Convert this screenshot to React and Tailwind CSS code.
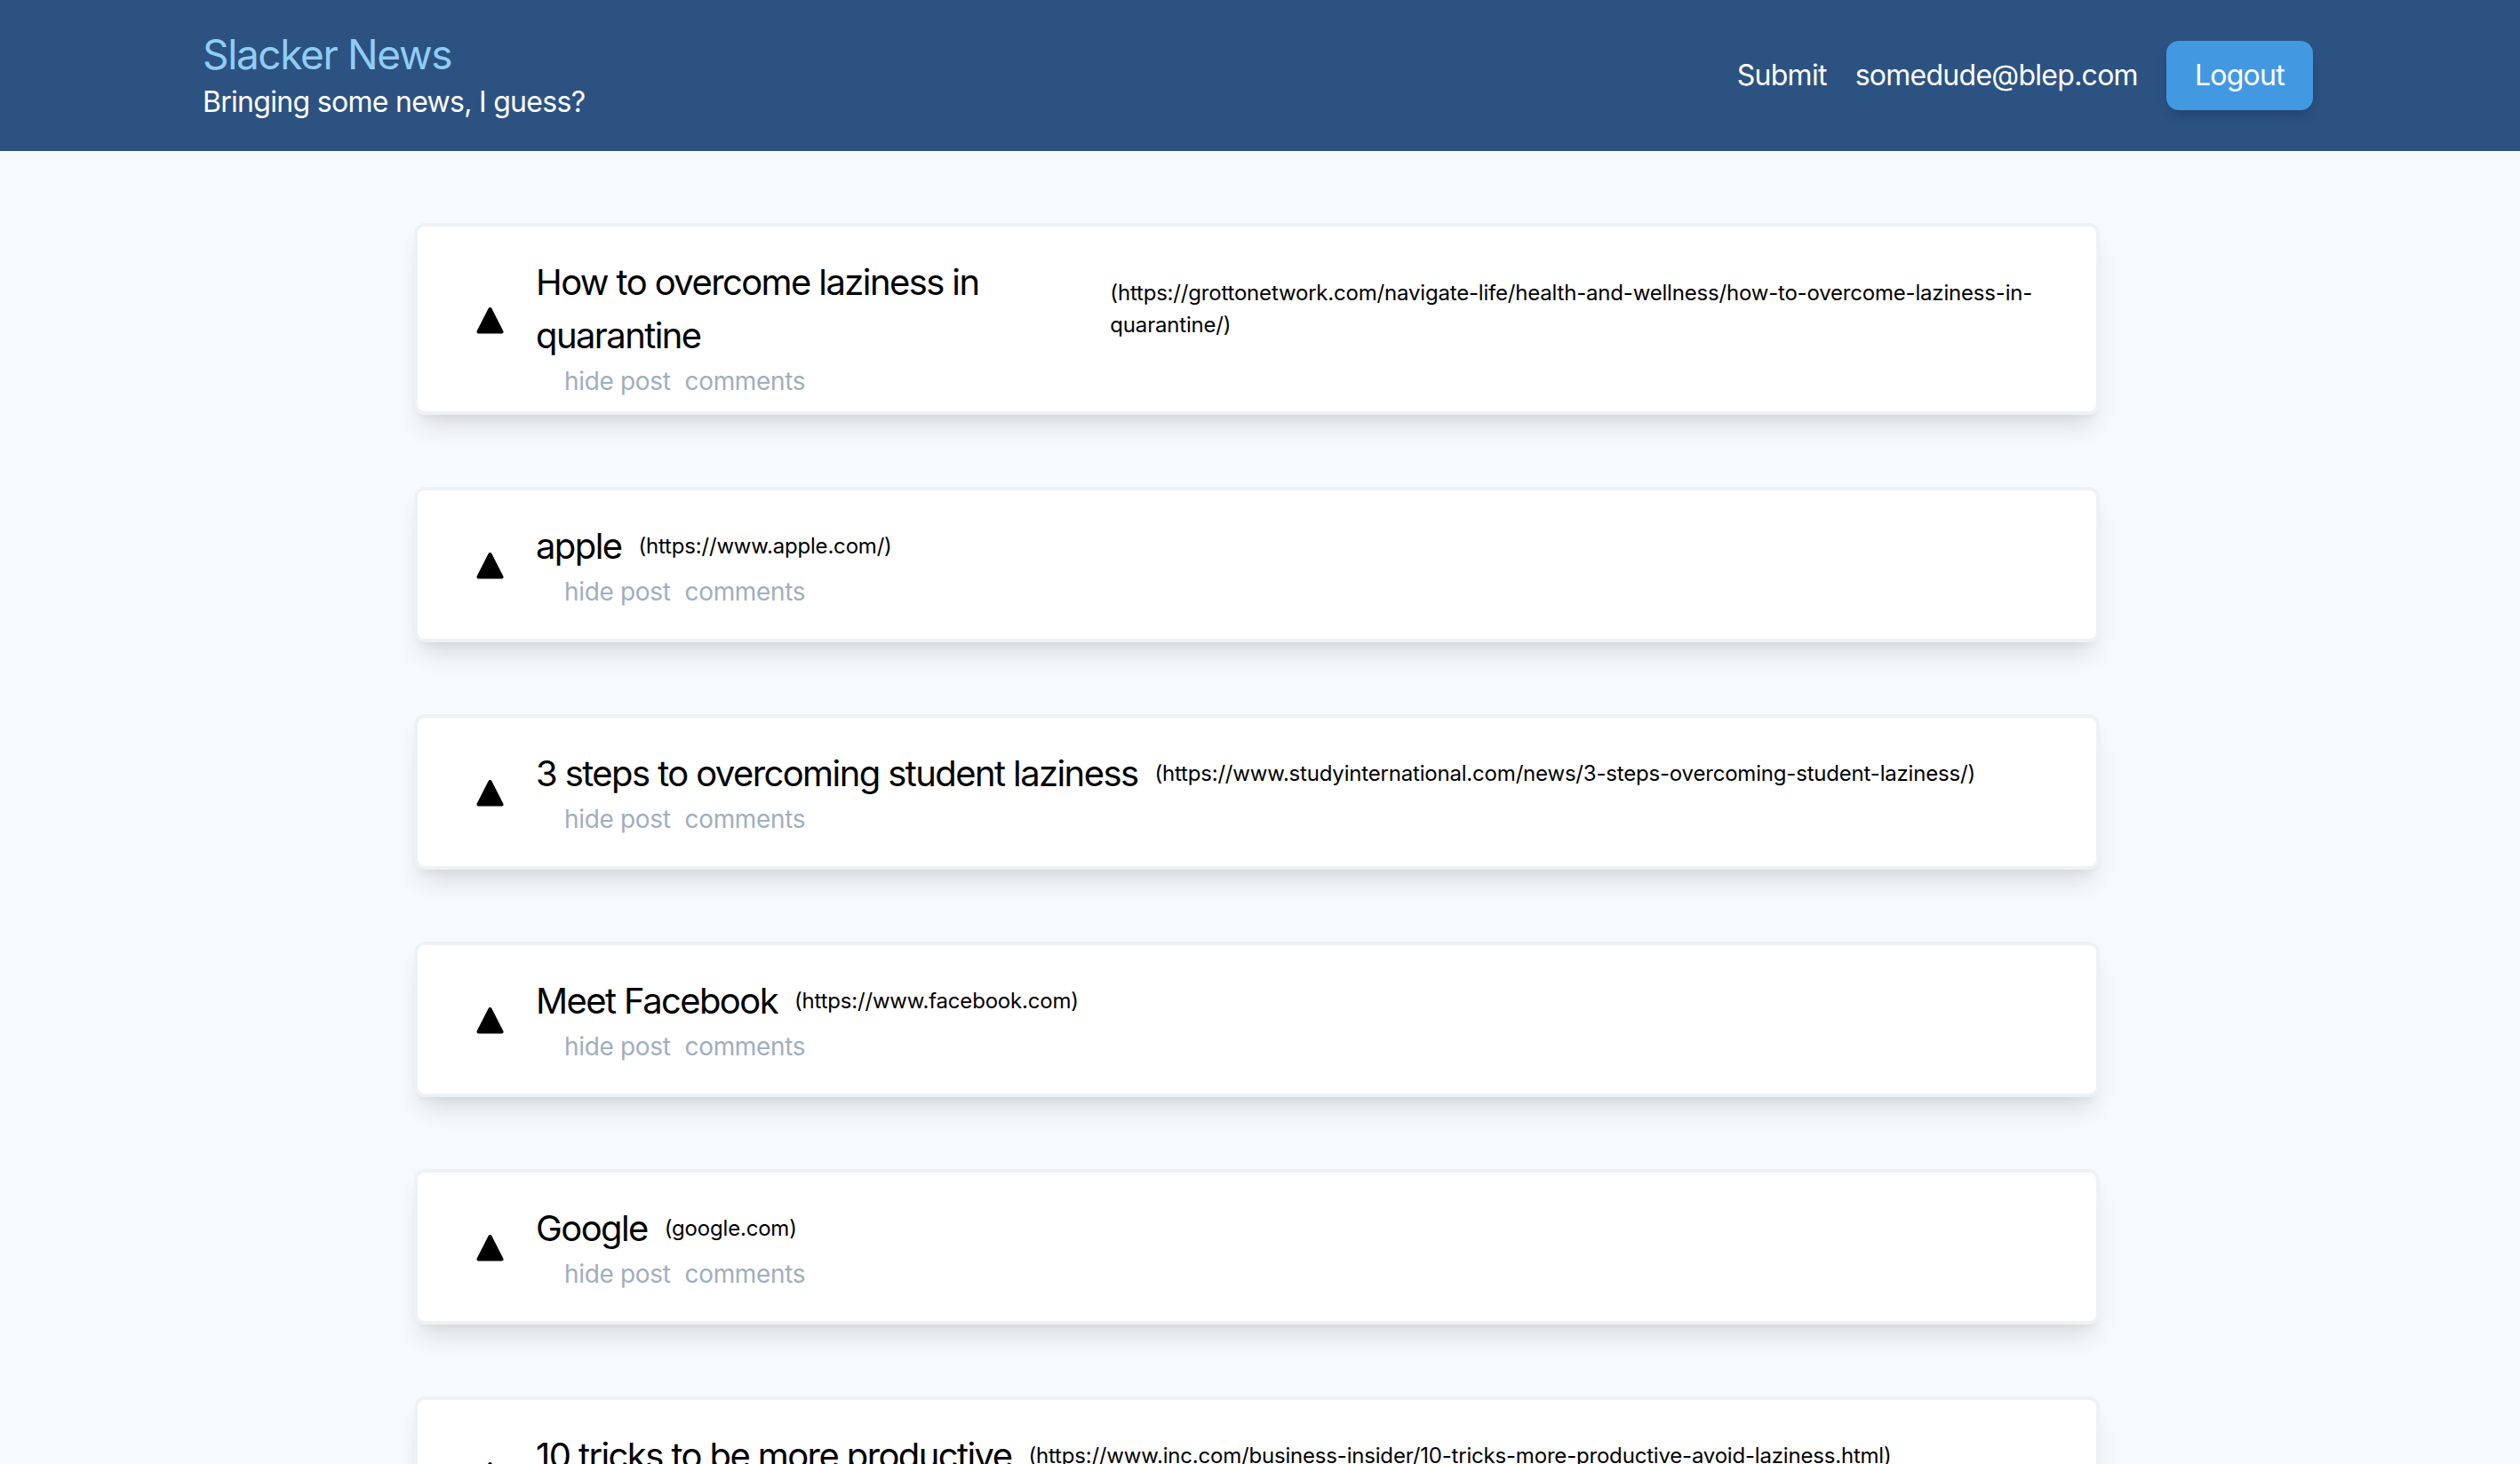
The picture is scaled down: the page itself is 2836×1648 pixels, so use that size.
import React from "react";

const posts = [
  {
    title: "How to overcome laziness in quarantine",
    url: "(https://grottonetwork.com/navigate-life/health-and-wellness/how-to-overcome-laziness-in-quarantine/)",
  },
  { title: "apple", url: "(https://www.apple.com/)" },
  {
    title: "3 steps to overcoming student laziness",
    url: "(https://www.studyinternational.com/news/3-steps-overcoming-student-laziness/)",
  },
  { title: "Meet Facebook", url: "(https://www.facebook.com)" },
  { title: "Google", url: "(google.com)" },
  {
    title: "10 tricks to be more productive",
    url: "(https://www.inc.com/business-insider/10-tricks-more-productive-avoid-laziness.html)",
  },
];

function Arrow() {
  return (
    <svg width="31" height="31" viewBox="0 0 31 31" aria-hidden="true">
      <path
        d="M15.5 3 L28.5 28.5 L2.5 28.5 Z"
        fill="#000"
        stroke="#000"
        strokeWidth="4"
        strokeLinejoin="round"
      />
    </svg>
  );
}

function Post({ title, url }) {
  return (
    <div className="mt-[81px] w-[1897px] flex rounded-xl border-4 border-[#edf2f7] bg-white pl-[66px] pr-[48px] pt-[15px] pb-[13px] shadow-[0_20px_28px_-8px_rgba(0,0,0,0.12),0_6px_10px_-4px_rgba(0,0,0,0.05)]">
      <div className="w-[31px] min-h-[139px] flex items-center shrink-0">
        <Arrow />
      </div>
      <div className="ml-[36px] mt-[18px] flex flex-col min-w-0">
        <div className="flex items-center">
          <span className="text-[40px] leading-[60px] tracking-[-0.04em] text-black">{title}</span>
          <span className="ml-[19px] text-[24px] leading-[36px] tracking-[-0.008em] text-black">{url}</span>
        </div>
        <div className="ml-[32px] flex text-[28px] leading-[42px] tracking-[-0.012em] text-[#a0aec0]">
          <span className="mr-[16px]">hide post</span>
          <span>comments</span>
        </div>
      </div>
    </div>
  );
}

export default function App() {
  return (
    <div
      className="min-h-screen bg-[#f7fafc]"
      style={{ fontFamily: "Inter, 'Noto Sans', sans-serif" }}
    >
      <header className="h-[170px] bg-[#2c5282] pl-[228px] pr-[233px] flex items-center justify-between">
        <div className="flex flex-col">
          <span className="text-[46px] leading-[60px] tracking-[-0.03em] text-[#90cdf4]">Slacker News</span>
          <span className="text-[32px] leading-[48px] tracking-[-0.022em] text-white">Bringing some news, I guess?</span>
        </div>
        <div className="flex items-center text-[32px] tracking-[-0.023em] text-white">
          <span className="mr-[32px]">Submit</span>
          <span className="mr-[32px]">somedude@blep.com</span>
          <button className="h-[78px] px-[32px] rounded-[14px] bg-[#4299e1] text-white tracking-[-0.023em] shadow-[0_8px_14px_-4px_rgba(0,0,0,0.2)]">
            Logout
          </button>
        </div>
      </header>
      <main className="flex flex-col items-start pl-[466px] pb-[80px]">
        {posts.map((p) => (
          <Post key={p.title} {...p} />
        ))}
      </main>
    </div>
  );
}
